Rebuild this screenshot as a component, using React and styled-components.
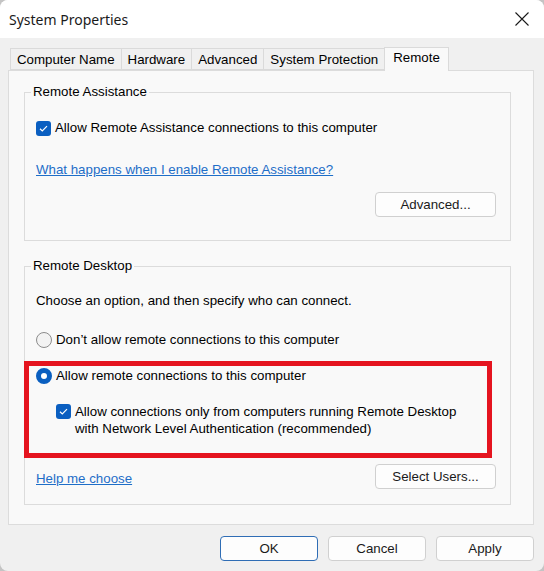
import React from "react";
import styled, { createGlobalStyle } from "styled-components";

const GlobalStyle = createGlobalStyle`
  html, body {
    margin: 0;
    padding: 0;
    background: #c4c4c4;
  }
  body {
    font-family: "Liberation Sans", Arial, sans-serif;
    font-size: 13.3px;
    color: #000;
  }
  * { box-sizing: border-box; }
`;

const Window = styled.div`
  width: 544px;
  height: 571px;
  background: #f0f0f0;
  border-radius: 8px;
  overflow: hidden;
  display: flex;
  flex-direction: column;
`;

const TitleBar = styled.div`
  height: 38px;
  flex: none;
  background: #fff;
  display: flex;
  align-items: center;
  justify-content: space-between;
  padding: 0 14px 0 9px;
`;

const Title = styled.span`
  font-family: "Noto Sans", "Open Sans", sans-serif;
  font-size: 14px;
  color: #1a1a1a;
`;

const CloseButton = styled.button`
  border: 0;
  background: none;
  padding: 0;
  width: 16px;
  height: 16px;
  display: flex;
  align-items: center;
  justify-content: center;
`;

const Body = styled.div`
  padding: 9px 10px 0 8px;
  display: flex;
  flex-direction: column;
`;

const TabStrip = styled.div`
  display: flex;
  align-items: flex-end;
  height: 23px;
  padding-left: 2px;
  position: relative;
  z-index: 1;
`;

const Tab = styled.div`
  height: ${(p) => (p.$active ? "24px" : "22px")};
  margin: ${(p) => (p.$active ? "0 -2px -1px -1px" : "0 0 0 -1px")};
  padding: ${(p) => (p.$active ? "1px 8px 0" : "2px 6px 0")};
  border: 1px solid #dadada;
  border-bottom: ${(p) => (p.$active ? "0" : "1px solid #dadada")};
  background: ${(p) => (p.$active ? "#f9f9f9" : "#f0f0f0")};
  line-height: 17px;
  white-space: nowrap;
  color: #000;
  &:first-child { margin-left: 0; }
`;

const Panel = styled.div`
  height: 455px;
  border: 1px solid #dcdcdc;
  background: #f9f9f9;
  padding: 13px 22px 0 15px;
  display: flex;
  flex-direction: column;
`;

const Group = styled.fieldset`
  margin: ${(p) => p.$gap || 0}px 0 0;
  padding: 0 11px;
  border: 1px solid #dcdcdc;
  min-width: 0;
`;

const Legend = styled.legend`
  margin-left: -5px;
  padding: 0 2px;
  line-height: 16px;
  color: #000;
`;

const Column = styled.div`
  display: flex;
  flex-direction: column;
  padding: ${(p) => p.$pad};
`;

const Row = styled.label`
  display: flex;
  align-items: ${(p) => (p.$top ? "flex-start" : "center")};
  gap: 4px;
  line-height: ${(p) => (p.$top ? "17px" : "16px")};
  margin-top: ${(p) => p.$mt || 0}px;
  margin-left: ${(p) => p.$indent || 0}px;
`;

const Text = styled.span`
  line-height: 16px;
  margin-top: ${(p) => p.$mt || 0}px;
`;

const LinkText = styled.a`
  color: #1e6ec8;
  text-decoration: underline;
  line-height: 16px;
  margin-top: ${(p) => p.$mt || 0}px;
  align-self: ${(p) => (p.$inline ? "center" : "flex-start")};
  padding-top: ${(p) => (p.$inline ? "5px" : "0")};
  cursor: pointer;
`;

const ButtonRow = styled.div`
  display: flex;
  align-items: center;
  justify-content: ${(p) => (p.$split ? "space-between" : "flex-end")};
  margin: ${(p) => p.$mt || 0}px 3px 0 0;
`;

const Button = styled.button`
  width: ${(p) => p.$w || 98}px;
  height: 25px;
  border: 1px solid ${(p) => (p.$primary ? "#2f6db5" : "#d0d0d0")};
  border-radius: 4px;
  background: #fdfdfd;
  font-family: "Liberation Sans", Arial, sans-serif;
  font-size: 13.3px;
  color: #1a1a1a;
  padding: 0;
`;

const Highlight = styled.div`
  margin: ${(p) => p.$mt || 0}px 7px 0 -12px;
  border: 5px solid #e5141f;
  padding: 2px 7px 16px;
  display: flex;
  flex-direction: column;
`;

const Radio = styled.span`
  flex: none;
  width: 16px;
  height: 16px;
  border-radius: 50%;
  border: ${(p) => (p.$checked ? "5px solid #0a5fc0" : "1px solid #8c8c8c")};
  background: ${(p) => (p.$checked ? "#fff" : "#f3f3f3")};
`;

const Footer = styled.div`
  display: flex;
  justify-content: flex-end;
  gap: 10px;
  margin-top: 11px;
`;

function Check({ top }) {
  return (
    <svg width="15" height="15" viewBox="0 0 15 15" style={{ flex: "none", marginTop: top || 0 }}>
      <rect x="0" y="0" width="15" height="15" rx="3" fill="#0b5fc1" />
      <path d="M4 7.8 L6.3 10 L11 5.2" fill="none" stroke="#fff" strokeWidth="1.2" />
    </svg>
  );
}

const tabs = ["Computer Name", "Hardware", "Advanced", "System Protection", "Remote"];

export default function App() {
  return (
    <>
      <GlobalStyle />
      <Window>
        <TitleBar>
          <Title>System Properties</Title>
          <CloseButton>
            <svg width="14" height="14" viewBox="0 0 14 14">
              <path d="M0.5 0.5 L13.5 13.5 M13.5 0.5 L0.5 13.5" stroke="#1a1a1a" strokeWidth="1.1" />
            </svg>
          </CloseButton>
        </TitleBar>

        <Body>
          <TabStrip>
            {tabs.map((t) => (
              <Tab key={t} $active={t === "Remote"}>{t}</Tab>
            ))}
          </TabStrip>

          <Panel>
            <Group>
              <Legend>Remote Assistance</Legend>
              <Column $pad="20px 0 23px">
                <Row>
                  <Check />
                  <span>Allow Remote Assistance connections to this computer</span>
                </Row>
                <LinkText $mt={26}>What happens when I enable Remote Assistance?</LinkText>
                <ButtonRow $mt={14}>
                  <Button $w={121}>Advanced...</Button>
                </ButtonRow>
              </Column>
            </Group>

            <Group $gap={17}>
              <Legend>Remote Desktop</Legend>
              <Column $pad="19px 0 15px">
                <Text>Choose an option, and then specify who can connect.</Text>
                <Row $mt={23}>
                  <Radio />
                  <span>Don’t allow remote connections to this computer</span>
                </Row>
                <Highlight $mt={13}>
                  <Row>
                    <Radio $checked />
                    <span>Allow remote connections to this computer</span>
                  </Row>
                  <Row $top $mt={19} $indent={20}>
                    <Check top={1} />
                    <span>
                      Allow connections only from computers running Remote Desktop
                      <br />
                      with Network Level Authentication (recommended)
                    </span>
                  </Row>
                </Highlight>
                <ButtonRow $split $mt={6}>
                  <LinkText $inline>Help me choose</LinkText>
                  <Button $w={121}>Select Users...</Button>
                </ButtonRow>
              </Column>
            </Group>
          </Panel>

          <Footer>
            <Button $primary>OK</Button>
            <Button>Cancel</Button>
            <Button>Apply</Button>
          </Footer>
        </Body>
      </Window>
    </>
  );
}
